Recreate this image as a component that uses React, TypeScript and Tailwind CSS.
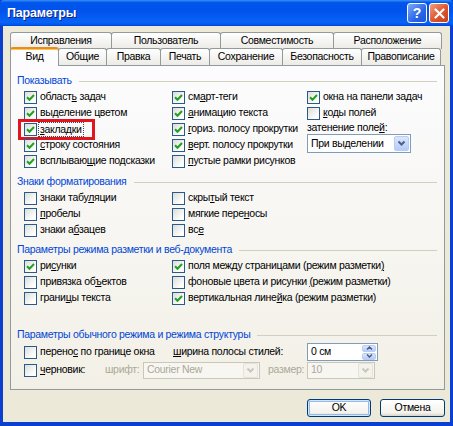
import { ReactNode } from 'react';

const tabsBack = [
    { label: 'Исправления', w: 102 },
    { label: 'Пользователь', w: 110 },
    { label: 'Совместимость', w: 114 },
    { label: 'Расположение', w: 109 },
];

const tabsFront = [
    { label: 'Вид', w: 49, active: true },
    { label: 'Общие', w: 49 },
    { label: 'Правка', w: 55 },
    { label: 'Печать', w: 50 },
    { label: 'Сохранение', w: 74 },
    { label: 'Безопасность', w: 80 },
    { label: 'Правописание', w: 80 },
];

// text with one underlined access key
function Acc({ t, i }: { t: string; i?: number }) {
    if (i === undefined) return <>{t}</>;
    return (
        <>
            {t.slice(0, i)}
            <u className="underline-offset-1">{t[i]}</u>
            {t.slice(i + 1)}
        </>
    );
}

function Check({ on }: { on?: boolean }) {
    return (
        <span className="flex h-[13px] w-[13px] shrink-0 items-center justify-center border border-[#2A5A8A] bg-[linear-gradient(135deg,#DCDCD7,#FFFFFF_80%)]">
            {on && (
                <svg width="9" height="9" viewBox="0 0 9 9">
                    <path d="M1 4.2 L3.5 6.7 L8 2" fill="none" stroke="#21A121" strokeWidth="2" />
                </svg>
            )}
        </span>
    );
}

function Row({ on, children, focus }: { on?: boolean; children: ReactNode; focus?: boolean }) {
    return (
        <div className="relative flex h-4 items-center">
            <Check on={on} />
            {focus ? (
                <span className="ml-px border border-dotted border-[#444] px-px leading-[13px]">{children}</span>
            ) : (
                <span className="ml-[3px] whitespace-nowrap">{children}</span>
            )}
            {focus && <span className="absolute -left-[6px] -top-[2px] h-[21px] w-[77px] border-[3px] border-[#E3141D]" />}
        </div>
    );
}

function Group({ title, className = '' }: { title: string; className?: string }) {
    return (
        <div className={`flex h-4 items-center ${className}`}>
            <span className="whitespace-nowrap text-[#0046D5]">{title}</span>
            <span className="ml-[7px] mr-[1px] h-px flex-1 bg-[#D0D0BF]" />
        </div>
    );
}

function Chevron({ color }: { color: string }) {
    return (
        <svg width="9" height="7" viewBox="0 0 9 7">
            <path d="M1.5 1.5 L4.5 4.5 L7.5 1.5" fill="none" stroke={color} strokeWidth="2" />
        </svg>
    );
}

function DropArrow({ disabled }: { disabled?: boolean }) {
    return (
        <span
            className={`mr-px flex h-[15px] w-[15px] items-center justify-center rounded-[2px] border ${
                disabled
                    ? 'border-[#E5E3D8] bg-[#F3F2EC]'
                    : 'border-[#B9CCF6] bg-[linear-gradient(#DCE6FD,#B5CBF8)]'
            }`}
        >
            <Chevron color={disabled ? '#C9C7BA' : '#4D6185'} />
        </span>
    );
}

function XpButton({ label, def, w }: { label: string; def?: boolean; w: string }) {
    return (
        <div
            className={`flex h-[18px] ${w} items-center justify-center rounded-[3px] border border-[#003C74] bg-[linear-gradient(#FFFFFF,#F3F2EC_80%,#D8D3C8)] ${
                def ? 'shadow-[inset_0_0_0_1px_#CEE7FF,inset_0_0_0_2px_#98B8EA]' : ''
            }`}
        >
            {label}
        </div>
    );
}

export default function App() {
    return (
        <div className="flex h-[426px] w-[453px] flex-col bg-[#0A3FD0] font-['Liberation_Sans',Arial,sans-serif] text-[10.5px] tracking-[-0.3px] text-black">
            {/* title bar */}
            <div className="flex h-[26px] shrink-0 items-center rounded-t-[4px] bg-[linear-gradient(180deg,#3C8EF5,#0056EC_10%,#0052EC_40%,#0863F5_85%,#0058F0_94%,#0040D8)] pl-[7px] pr-[4px]">
                <span className="flex-1 text-[12.5px] font-bold tracking-[-0.2px] text-white [text-shadow:1px_1px_#0F1F89]">Параметры</span>
                <div className="flex gap-[2px]">
                    <span className="flex h-[20px] w-[20px] items-center justify-center rounded-[3px] border border-white bg-[linear-gradient(135deg,#7FAAF8,#2A66E6_60%,#1E55D6)] text-[14px] font-bold text-white">
                        ?
                    </span>
                    <span className="flex h-[20px] w-[20px] items-center justify-center rounded-[3px] border border-white bg-[linear-gradient(135deg,#F0A080,#E0532B_55%,#C8401A)]">
                        <svg width="11" height="11" viewBox="0 0 11 11">
                            <path d="M1.5 1.5 L9.5 9.5 M9.5 1.5 L1.5 9.5" stroke="#fff" strokeWidth="2.2" strokeLinecap="round" />
                        </svg>
                    </span>
                </div>
            </div>

            {/* body */}
            <div className="mx-[3px] mb-[4px] flex flex-1 flex-col bg-[#ECE9D8] pl-[7px] pr-[5px] pt-[6px]">
                {/* tabs */}
                <div className="flex h-4">
                    {tabsBack.map((t, idx) => (
                        <div
                            key={t.label}
                            style={{ width: t.w }}
                            className={`flex h-[17px] items-center justify-center rounded-t-[3px] border border-b-0 border-[#919B9C] bg-[linear-gradient(#FFFFFF,#ECEBE6)] ${
                                idx > 0 ? '-ml-px' : ''
                            }`}
                        >
                            {t.label}
                        </div>
                    ))}
                </div>
                <div className="flex h-[17px] items-end">
                    {tabsFront.map((t, idx) =>
                        t.active ? (
                            <div
                                key={t.label}
                                style={{ width: t.w }}
                                className="relative z-10 -mb-px flex h-[19px] items-center justify-center rounded-t-[3px] border-x border-t-[2px] border-x-[#919B9C] border-t-[#E68B2C] bg-[#FCFCFE] pb-px shadow-[inset_0_1px_0_#FFC83C]"
                            >
                                {t.label}
                            </div>
                        ) : (
                            <div
                                key={t.label}
                                style={{ width: t.w }}
                                className={`flex h-[17px] items-center justify-center rounded-t-[3px] border border-b-0 border-[#919B9C] bg-[linear-gradient(#FFFFFF,#ECEBE6)] ${
                                    idx > 0 ? '-ml-px' : ''
                                }`}
                            >
                                {t.label}
                            </div>
                        ),
                    )}
                </div>

                {/* panel */}
                <div className="h-[325px] border border-[#919B9C] bg-[linear-gradient(#FCFCFE,#F2F0E6)] px-[6px] pt-[7px]">
                    <Group title="Показывать" />
                    <div className="grid grid-cols-[148px_135px_1fr] pl-[7px]">
                        <div>
                            <Row on><Acc t="область задач" i={6} /></Row>
                            <Row on>выделение цветом</Row>
                            <Row on focus><Acc t="закладки" i={0} /></Row>
                            <Row on><Acc t="строку состояния" i={0} /></Row>
                            <Row on><Acc t="всплывающие подсказки" i={8} /></Row>
                        </div>
                        <div>
                            <Row on><Acc t="смарт-теги" i={2} /></Row>
                            <Row on><Acc t="анимацию текста" i={0} /></Row>
                            <Row on><Acc t="гориз. полосу прокрутки" i={0} /></Row>
                            <Row on><Acc t="верт. полосу прокрутки" i={0} /></Row>
                            <Row><Acc t="пустые рамки рисунков" i={0} /></Row>
                        </div>
                        <div>
                            <Row on>окна на панели задач</Row>
                            <Row><Acc t="коды полей" i={0} /></Row>
                            <div className="flex h-[13px] items-center whitespace-nowrap">
                                <Acc t="затенение полей:" i={14} />
                            </div>
                            <div className="flex h-[19px] w-[104px] items-center border border-[#7F9DB9] bg-white pl-[3px]">
                                <span className="flex-1">При выделении</span>
                                <DropArrow />
                            </div>
                        </div>
                    </div>

                    <Group title="Знаки форматирования" className="mt-[5px]" />
                    <div className="grid grid-cols-[148px_135px_1fr] pl-[7px]">
                        <div>
                            <Row><Acc t="знаки табуляции" i={10} /></Row>
                            <Row><Acc t="пробелы" i={0} /></Row>
                            <Row><Acc t="знаки абзацев" i={7} /></Row>
                        </div>
                        <div>
                            <Row><Acc t="скрытый текст" i={4} /></Row>
                            <Row><Acc t="мягкие переносы" i={11} /></Row>
                            <Row><Acc t="все" i={2} /></Row>
                        </div>
                    </div>

                    <Group title="Параметры режима разметки и веб-документа" className="mt-[4px]" />
                    <div className="grid grid-cols-[148px_1fr] pl-[7px]">
                        <div>
                            <Row on><Acc t="рисунки" i={2} /></Row>
                            <Row><Acc t="привязка объектов" i={11} /></Row>
                            <Row><Acc t="границы текста" i={5} /></Row>
                        </div>
                        <div>
                            <Row on><Acc t="поля между страницами (режим разметки)" i={37} /></Row>
                            <Row><Acc t="фоновые цвета и рисунки (режим разметки)" i={24} /></Row>
                            <Row on><Acc t="вертикальная линейка (режим разметки)" i={17} /></Row>
                        </div>
                    </div>

                    <Group title="Параметры обычного режима и режима структуры" className="mt-[21px]" />
                    <div className="pl-[7px]">
                        <div className="flex h-[18px] items-center">
                            <div className="w-[148px]">
                                <Row><Acc t="перенос по границе окна" i={6} /></Row>
                            </div>
                            <span className="w-[135px] pl-px"><Acc t="ширина полосы стилей:" i={0} /></span>
                            <div className="flex h-[18px] w-[71px] items-center border border-[#7F9DB9] bg-white pl-[3px]">
                                <span className="flex-1">0 см</span>
                                <div className="mr-px flex flex-col gap-px">
                                    <span className="flex h-[7px] w-[14px] items-center justify-center rounded-[2px] border border-[#B9CCF6] bg-[linear-gradient(#DCE6FD,#B5CBF8)]">
                                        <svg width="7" height="4" viewBox="0 0 7 4"><path d="M1 3.5 L3.5 1 L6 3.5" fill="none" stroke="#4D6185" strokeWidth="1.5" /></svg>
                                    </span>
                                    <span className="flex h-[7px] w-[14px] items-center justify-center rounded-[2px] border border-[#B9CCF6] bg-[linear-gradient(#DCE6FD,#B5CBF8)]">
                                        <svg width="7" height="4" viewBox="0 0 7 4"><path d="M1 0.5 L3.5 3 L6 0.5" fill="none" stroke="#4D6185" strokeWidth="1.5" /></svg>
                                    </span>
                                </div>
                            </div>
                        </div>
                        <div className="flex h-[18px] items-center">
                            <div className="w-[81px]">
                                <Row><Acc t="черновик:" i={0} /></Row>
                            </div>
                            <span className="w-[38px] text-[#ACA899]">шрифт:</span>
                            <div className="flex h-[17px] w-[117px] items-center border border-[#C9C7BA] bg-[#F7F6F1] pl-[3px] text-[#ACA899]">
                                <span className="flex-1">Courier New</span>
                                <DropArrow disabled />
                            </div>
                            <span className="ml-[8px] w-[39px] text-[#ACA899]">размер:</span>
                            <div className="flex h-[17px] w-[68px] items-center border border-[#C9C7BA] bg-[#F7F6F1] pl-[3px] text-[#ACA899]">
                                <span className="flex-1">10</span>
                                <DropArrow disabled />
                            </div>
                        </div>
                    </div>
                </div>

                {/* buttons */}
                <div className="flex justify-end gap-[9px] pt-[9px]">
                    <XpButton label="OK" def w="w-[64px]" />
                    <XpButton label="Отмена" w="w-[65px]" />
                </div>
            </div>
        </div>
    );
}
